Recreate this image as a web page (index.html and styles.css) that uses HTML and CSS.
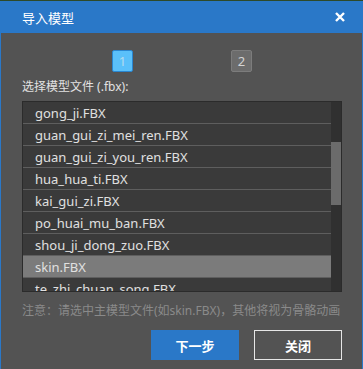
FILE: index.html
```html
<!DOCTYPE html>
<html lang="zh-CN">

<head>
    <meta charset="UTF-8">
    <meta name="viewport" content="width=device-width, initial-scale=1.0">
    <title>导入模型</title>
    <link rel="stylesheet" href="styles.css">
</head>

<body>
    <div class="dialog">
        <div class="titlebar">
            <span class="title">导入模型</span>
            <svg class="close" width="10" height="10" viewBox="0 0 10 10">
                <path d="M1 1 L9 9 M9 1 L1 9" stroke="white" stroke-width="2.4" />
            </svg>
        </div>
        <div class="content">
            <div class="steps">
                <div class="step active">1</div>
                <div class="step">2</div>
            </div>
            <div class="label">选择模型文件 (.fbx):</div>
            <div class="list">
                <div class="rows">
                    <div class="row">gong_ji.FBX</div>
                    <div class="row">guan_gui_zi_mei_ren.FBX</div>
                    <div class="row">guan_gui_zi_you_ren.FBX</div>
                    <div class="row">hua_hua_ti.FBX</div>
                    <div class="row">kai_gui_zi.FBX</div>
                    <div class="row">po_huai_mu_ban.FBX</div>
                    <div class="row">shou_ji_dong_zuo.FBX</div>
                    <div class="row selected">skin.FBX</div>
                    <div class="row">te_zhi_chuan_song.FBX</div>
                </div>
                <div class="scrollbar">
                    <div class="thumb"></div>
                </div>
            </div>
            <div class="note">注意：请选中主模型文件(如skin.FBX)，其他将视为骨骼动画</div>
            <div class="buttons">
                <button class="btn primary">下一步</button>
                <button class="btn">关闭</button>
            </div>
        </div>
    </div>
</body>

</html>
```

FILE: styles.css
```css
body{
    margin: 0;
    background-color: #2d4a2a;
    font-family: "Noto Sans", "Noto Sans CJK SC", sans-serif;
}
.dialog{
    width: 361px;
    height: 368px;
    margin-top: 1px;
    border: 1px solid #2a78c8;
    border-top: none;
    border-bottom-width: 2px;
    background-color: #535353;
    display: flex;
    flex-direction: column;
}
.titlebar{
    height: 32px;
    background-color: #2a78c8;
    color: white;
    display: flex;
    align-items: center;
    justify-content: space-between;
    padding: 0 17px 0 21px;
}
.title{
    font-size: 13px;
}
.content{
    padding: 0 20px 0 21px;
}
.steps{
    display: flex;
    justify-content: center;
    gap: 98px;
    margin-top: 17px;
}
.step{
    width: 19px;
    height: 20px;
    border: 1px solid #7c7c7c;
    border-radius: 2px;
    background-color: #6c6c6c;
    color: #d4d4d4;
    font-size: 13px;
    line-height: 20px;
    text-align: center;
}
.step.active{
    background-color: #5ac0fa;
    border-color: #2a86d0;
    color: #b4dcee;
}
.label{
    margin-top: 7px;
    height: 22px;
    color: #e2e2e2;
    font-size: 12px;
    line-height: 16px;
}
.list{
    height: 189px;
    border: 1px solid #2b2b2b;
    background-color: #3a3a3a;
    display: flex;
    overflow: hidden;
}
.rows{
    flex: 1;
}
.row{
    height: 21px;
    border-bottom: 1px solid #5e5e5e;
    padding-left: 12px;
    color: #e0e0e0;
    font-size: 13px;
    line-height: 22px;
}
.row.selected{
    background-color: #7b7b7b;
}
.scrollbar{
    width: 10px;
    background-color: #303030;
}
.thumb{
    margin-top: 40px;
    height: 63px;
    background-color: #6b6b6b;
}
.note{
    margin-top: 11px;
    color: #8a8a8a;
    font-size: 12px;
    line-height: 16px;
    white-space: nowrap;
}
.buttons{
    display: flex;
    justify-content: flex-end;
    gap: 15px;
    margin-top: 11px;
}
.btn{
    width: 88px;
    height: 30px;
    border: 1px solid #e6e6e6;
    background-color: transparent;
    color: white;
    font-family: "Noto Sans", "Noto Sans CJK SC", sans-serif;
    font-size: 13px;
    font-weight: bold;
}
.btn.primary{
    background-color: #2a78c8;
    border-color: #2a78c8;
}
```
